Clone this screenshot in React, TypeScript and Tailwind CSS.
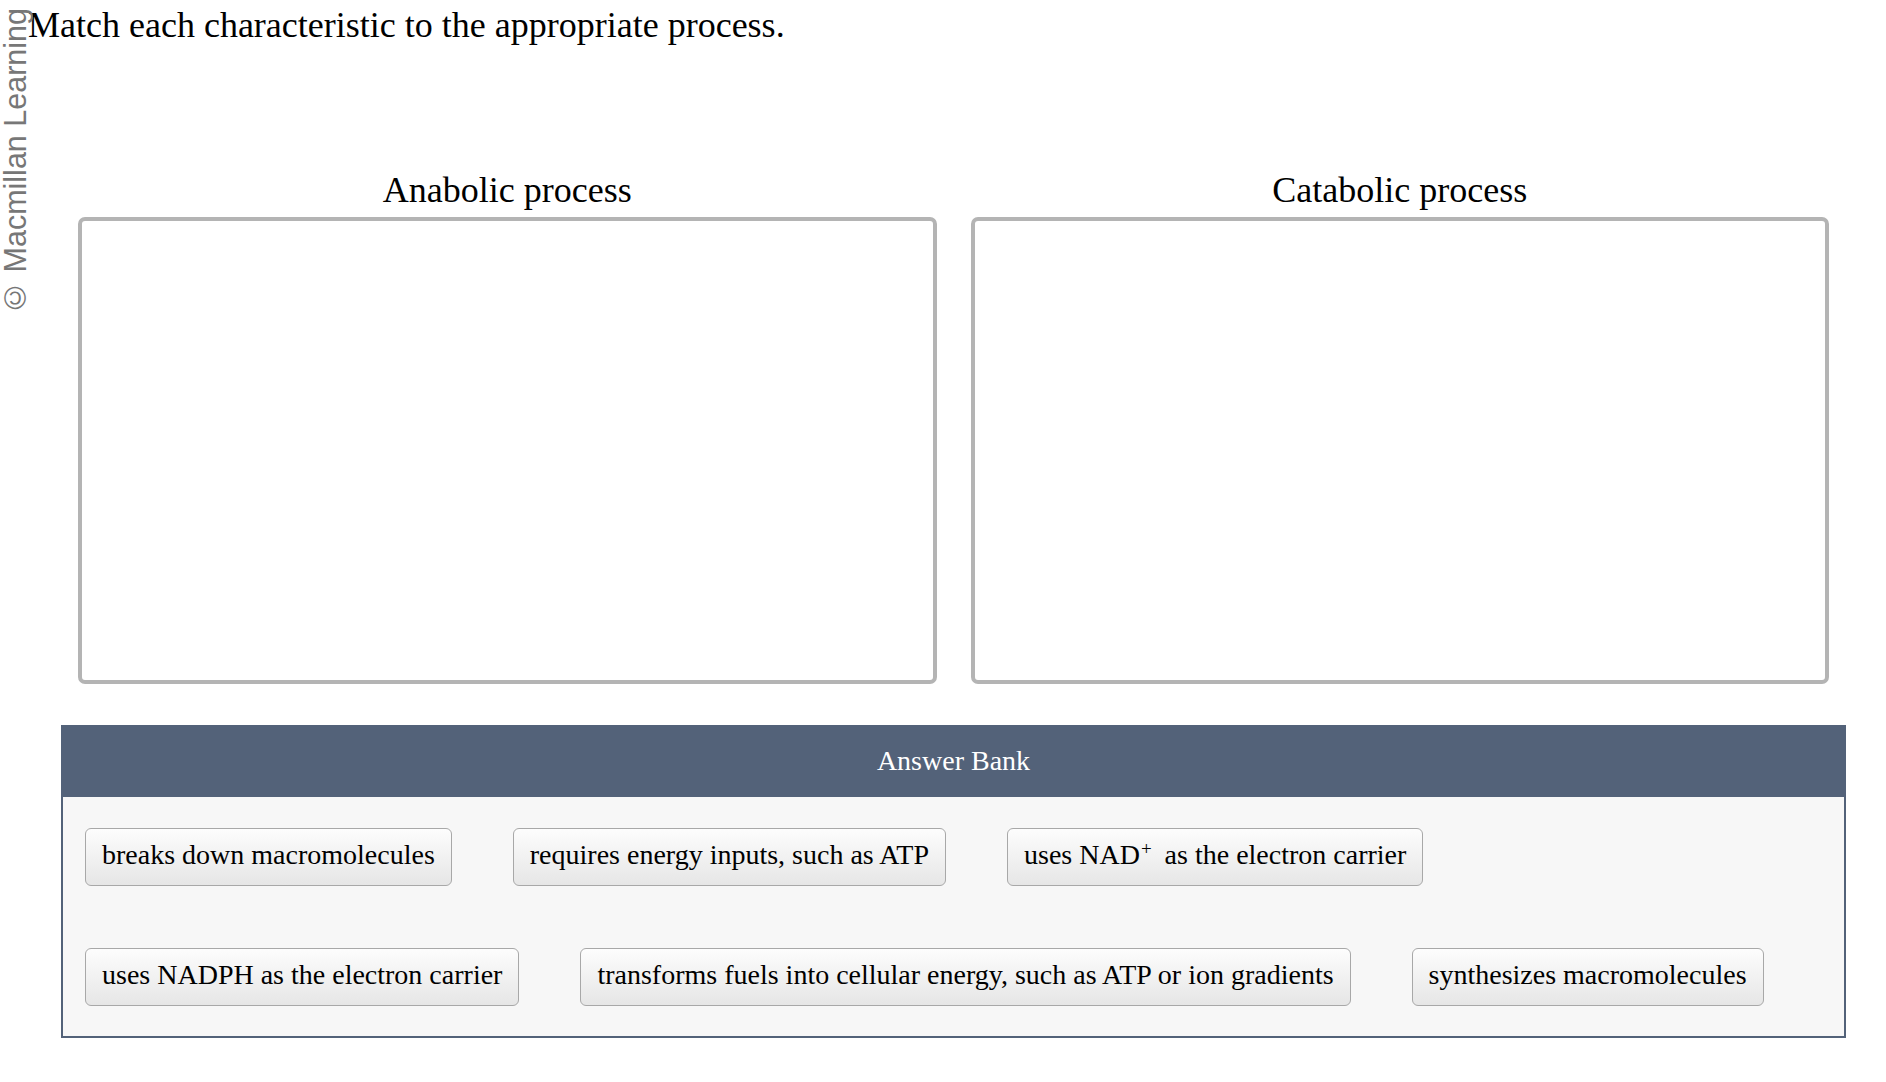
import React from "react";

const bankItems: React.ReactNode[] = [
  "breaks down macromolecules",
  "requires energy inputs, such as ATP",
  <>
    uses NAD<sup className="text-[19px] ml-[1px] mr-[6px]">+</sup> as the electron carrier
  </>,
  "uses NADPH as the electron carrier",
  "transforms fuels into cellular energy, such as ATP or ion gradients",
  "synthesizes macromolecules",
];

const DropZone: React.FC<{ title: string }> = ({ title }) => (
  <div className="flex-1 flex flex-col items-center">
    <h2 className="text-[36px] leading-[41px] mb-[6px]">{title}</h2>
    <div className="w-full h-[467px] border-4 border-[#b4b4b4] rounded-[7px] bg-white" />
  </div>
);

export default function App() {
  return (
    <div className="relative min-h-screen bg-white text-black font-['Liberation_Serif','Times_New_Roman',serif]">
      {/* watermark */}
      <div className="absolute left-0 top-[8px] [writing-mode:vertical-rl] rotate-180 text-[30.5px] leading-[30px] text-[#777777] font-['Liberation_Sans',Arial,sans-serif] whitespace-nowrap select-none">
        © Macmillan Learning
      </div>

      <h1 className="pl-[28px] pt-[5px] text-[36px] leading-[40px] font-normal">
        Match each characteristic to the appropriate process.
      </h1>

      {/* ================= DROP ZONES ================= */}
      <div className="ml-[78px] w-[1751px] mt-[125px] flex gap-[34px]">
        <DropZone title="Anabolic process" />
        <DropZone title="Catabolic process" />
      </div>

      {/* ================= ANSWER BANK ================= */}
      <div className="ml-[61px] w-[1785px] mt-[41px]">
        <div className="h-[72px] bg-[#536279] flex items-center justify-center text-white text-[28px]">
          Answer Bank
        </div>
        <div className="border-2 border-t-0 border-[#536279] bg-[#f7f7f7] px-[22px] pt-[31px] pb-[30px]">
          <div className="flex flex-wrap gap-x-[61px] gap-y-[62px]">
            {bankItems.map((item, i) => (
              <div
                key={i}
                className="border border-[#a8a8a8] rounded-[6px] bg-linear-to-b from-[#fdfdfd] to-[#e6e6e6] px-4 pt-[10px] pb-[14px] text-[28px] leading-[32px] whitespace-nowrap"
              >
                {item}
              </div>
            ))}
          </div>
        </div>
      </div>
    </div>
  );
}
